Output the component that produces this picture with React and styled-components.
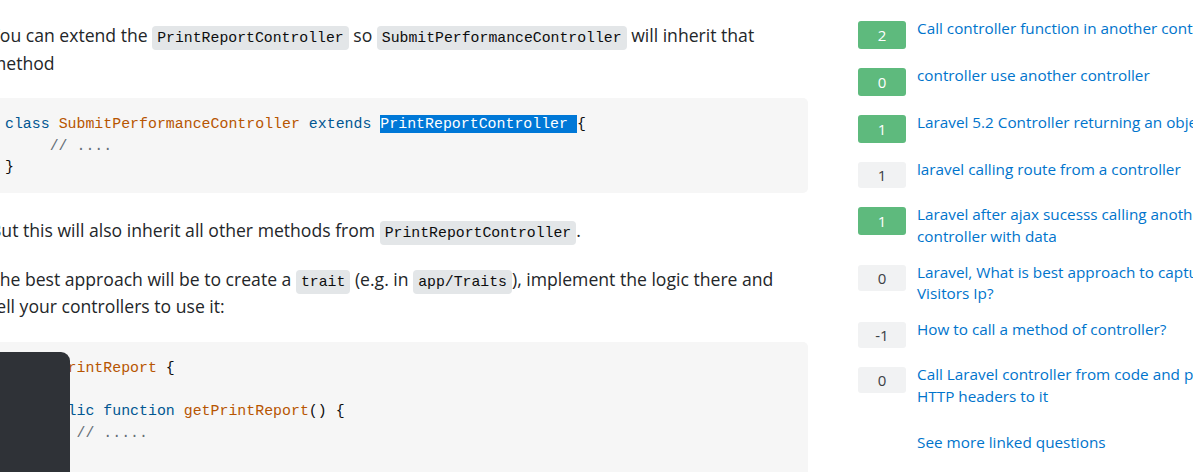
import React from "react";
import styled, { createGlobalStyle } from "styled-components";

const Global = createGlobalStyle`
  html, body { margin: 0; padding: 0; background: #ffffff; overflow: hidden; }
  body { font-family: "Open Sans", "Noto Sans", sans-serif; }
`;

const Viewport = styled.div`
  position: relative;
  width: 1193px;
  height: 472px;
  overflow: hidden;
`;

const Layout = styled.div`
  display: grid;
  grid-template-columns: 818px 384px;
  column-gap: 50px;
  margin-left: -10px;
`;

const Answer = styled.div`
  padding-top: 22px;
  min-width: 0;
`;

const Para = styled.p`
  margin: 0 0 21px;
  font-size: 17.6px;
  line-height: 27.5px;
  color: #232629;
`;

const InlineCode = styled.code`
  font-family: "Liberation Mono", "DejaVu Sans Mono", monospace;
  font-size: 14.8px;
  line-height: 1;
  background: #e3e6e8;
  color: #0c0d0e;
  border-radius: 4px;
  padding: 4px 5px;
`;

const CodeBlock = styled.pre`
  margin: 0 0 24px;
  padding: 16px 15px 14px;
  background: #f6f6f6;
  border-radius: 5px;
  font-family: "Liberation Mono", "DejaVu Sans Mono", monospace;
  font-size: 14.9px;
  line-height: 21.7px;
  color: #0c0d0e;
  white-space: pre;
  overflow: hidden;
`;

const tokenColors = {
  keyword: "#015692",
  title: "#b75501",
  comment: "#656e77",
};

const Tok = styled.span`
  color: ${(p) => tokenColors[p.$kind] || "inherit"};
`;

const Selected = styled.span`
  background: #0078d7;
  color: #ffffff;
  padding: 1px 0;
`;

const Sidebar = styled.div`
  padding-top: 18px;
`;

const LinkedRow = styled.div`
  display: flex;
  align-items: flex-start;
  gap: 11px;
  margin-bottom: 14.5px;
`;

const VoteBadge = styled.div`
  flex: 0 0 48px;
  height: ${(p) => (p.$accepted ? "28px" : "26px")};
  margin: 3px 0 1.5px;
  border-radius: 3px;
  display: flex;
  align-items: center;
  justify-content: center;
  font-size: 15px;
  background: ${(p) => (p.$accepted ? "#5eba7d" : "#f1f2f3")};
  color: ${(p) => (p.$accepted ? "#ffffff" : "#3b4045")};
`;

const QuestionLink = styled.a`
  flex: 1;
  color: #0074cc;
  font-size: 15.3px;
  line-height: 21.5px;
  text-decoration: none;
`;

const MoreLink = styled.a`
  display: block;
  margin: 24.5px 0 0 59px;
  color: #0074cc;
  font-size: 15.3px;
  line-height: 21.5px;
  text-decoration: none;
`;

const Overlay = styled.div`
  position: absolute;
  left: 0;
  top: 352px;
  bottom: 0;
  width: 70px;
  background: #2f3237;
  border-top-right-radius: 9px;
`;

const linked = [
  { votes: "2", accepted: true, title: "Call controller function in another controller" },
  { votes: "0", accepted: true, title: "controller use another controller" },
  { votes: "1", accepted: true, title: "Laravel 5.2 Controller returning an object" },
  { votes: "1", accepted: false, title: "laravel calling route from a controller" },
  { votes: "1", accepted: true, title: "Laravel after ajax sucesss calling another controller with data" },
  { votes: "0", accepted: false, title: "Laravel, What is best approach to capture Visitors Ip?" },
  { votes: "-1", accepted: false, title: "How to call a method of controller?" },
  { votes: "0", accepted: false, title: "Call Laravel controller from code and pass HTTP headers to it" },
];

export default function App() {
  return (
    <Viewport>
      <Global />
      <Layout>
        <Answer>
          <Para>
            You can extend the <InlineCode>PrintReportController</InlineCode> so{" "}
            <InlineCode>SubmitPerformanceController</InlineCode> will inherit that method
          </Para>
          <CodeBlock>
            <Tok $kind="keyword">class</Tok> <Tok $kind="title">SubmitPerformanceController</Tok>{" "}
            <Tok $kind="keyword">extends</Tok> <Selected>PrintReportController </Selected>{"{\n"}
            {"     "}
            <Tok $kind="comment">// ....</Tok>
            {"\n}"}
          </CodeBlock>
          <Para>
            But this will also inherit all other methods from <InlineCode>PrintReportController</InlineCode>.
          </Para>
          <Para>
            The best approach will be to create a <InlineCode>trait</InlineCode> (e.g. in{" "}
            <InlineCode>app/Traits</InlineCode>), implement the logic there and
            <br />
            tell your controllers to use it:
          </Para>
          <CodeBlock>
            <Tok $kind="keyword">trait</Tok> <Tok $kind="title">PrintReport</Tok>
            {" {\n\n    "}
            <Tok $kind="keyword">public</Tok> <Tok $kind="keyword">function</Tok>{" "}
            <Tok $kind="title">getPrintReport</Tok>
            {"() {\n        "}
            <Tok $kind="comment">// .....</Tok>
            {"\n    }\n}"}
          </CodeBlock>
        </Answer>
        <Sidebar>
          {linked.map((q, i) => (
            <LinkedRow key={i}>
              <VoteBadge $accepted={q.accepted}>{q.votes}</VoteBadge>
              <QuestionLink href="#">{q.title}</QuestionLink>
            </LinkedRow>
          ))}
          <MoreLink href="#">See more linked questions</MoreLink>
        </Sidebar>
      </Layout>
      <Overlay />
    </Viewport>
  );
}
